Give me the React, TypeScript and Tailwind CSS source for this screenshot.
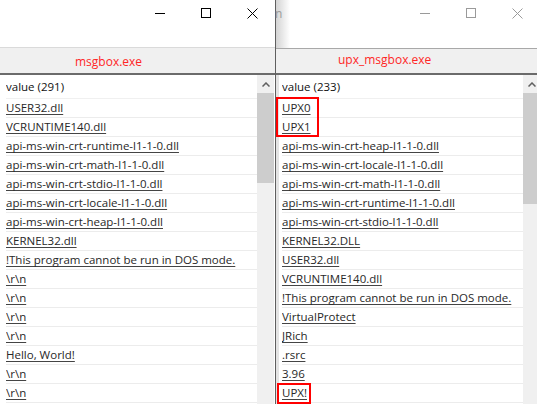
import React from 'react';

const leftItems = [
  'USER32.dll',
  'VCRUNTIME140.dll',
  'api-ms-win-crt-runtime-l1-1-0.dll',
  'api-ms-win-crt-math-l1-1-0.dll',
  'api-ms-win-crt-stdio-l1-1-0.dll',
  'api-ms-win-crt-locale-l1-1-0.dll',
  'api-ms-win-crt-heap-l1-1-0.dll',
  'KERNEL32.dll',
  '!This program cannot be run in DOS mode.',
  '\\r\\n',
  '\\r\\n',
  '\\r\\n',
  '\\r\\n',
  'Hello, World!',
  '\\r\\n',
  '\\r\\n',
];

const rightItems = [
  'UPX0',
  'UPX1',
  'api-ms-win-crt-heap-l1-1-0.dll',
  'api-ms-win-crt-locale-l1-1-0.dll',
  'api-ms-win-crt-math-l1-1-0.dll',
  'api-ms-win-crt-runtime-l1-1-0.dll',
  'api-ms-win-crt-stdio-l1-1-0.dll',
  'KERNEL32.DLL',
  'USER32.dll',
  'VCRUNTIME140.dll',
  '!This program cannot be run in DOS mode.',
  'VirtualProtect',
  'JRich',
  '.rsrc',
  '3.96',
  'UPX!',
];

const font = { fontFamily: '"Open Sans", "Noto Sans", sans-serif' };

const Controls: React.FC<{ color: string }> = ({ color }) => (
  <div className="flex ml-auto">
    <div className="w-[46px] h-[26px] flex items-center justify-center">
      <svg width="10" height="10" viewBox="0 0 10 10">
        <line x1="0" y1="5.5" x2="10" y2="5.5" stroke={color} strokeWidth="1" />
      </svg>
    </div>
    <div className="w-[46px] h-[26px] flex items-center justify-center">
      <svg width="10" height="10" viewBox="0 0 10 10">
        <rect x="0.5" y="0.5" width="9" height="9" fill="none" stroke={color} strokeWidth="1" />
      </svg>
    </div>
    <div className="w-[46px] h-[26px] flex items-center justify-center">
      <svg width="11" height="11" viewBox="0 0 11 11">
        <path d="M0.5 0.5 L10.5 10.5 M10.5 0.5 L0.5 10.5" stroke={color} strokeWidth="1" />
      </svg>
    </div>
  </div>
);

const Scrollbar: React.FC<{ thumb: string }> = ({ thumb }) => (
  <div className="w-[17px] shrink-0 bg-[#f0f0f0] flex flex-col">
    <div className="h-[18px] flex items-center justify-center">
      <svg width="8" height="5" viewBox="0 0 8 5">
        <path d="M0.5 4.5 L4 1 L7.5 4.5" fill="none" stroke="#606060" strokeWidth="1.5" />
      </svg>
    </div>
    <div className={`${thumb} bg-[#cdcdcd]`} />
  </div>
);

const Rows: React.FC<{ count: string; items: string[] }> = ({ count, items }) => (
  <div className="flex-1 flex flex-col overflow-hidden text-[11.5px]">
    <div className="h-[24px] shrink-0 flex items-center border-b border-[#f0f0f0] text-[#111]">
      value ({count})
    </div>
    {items.map((t, i) => (
      <div key={i} className="h-[19px] shrink-0 flex items-center border-b border-[#ececec] text-[#282828] whitespace-nowrap">
        <span className="underline decoration-[#444] underline-offset-2">{t}</span>
      </div>
    ))}
  </div>
);

export default function App() {
  return (
    <div className="w-[537px] h-[404px] flex overflow-hidden bg-white" style={font}>
      {/* left window */}
      <div className="w-[275px] shrink-0 flex flex-col">
        <div className="h-[47px] shrink-0 flex items-start bg-white">
          <Controls color="#000" />
        </div>
        <div className="h-[28px] shrink-0 border-t border-[#dadada] border-b-2 border-b-[#6b6b6b] bg-[#f0f0f0] flex items-center pl-[75px] pt-[2px] text-[12px] text-[#ff2626]">
          msgbox.exe
        </div>
        <div className="flex-1 flex overflow-hidden pl-[6px] pr-[1px]">
          <Rows count="291" items={leftItems} />
          <Scrollbar thumb="h-[90px]" />
        </div>
      </div>

      <div className="w-px shrink-0 bg-[#5f5f5f]" />

      {/* right window */}
      <div className="w-[264px] shrink-0 flex flex-col relative">
        <div className="h-[48px] shrink-0 flex items-start bg-gradient-to-r from-[#d4d4d4] via-white via-[14px] to-white">
          <span className="text-[12px] text-[#9a9a9a] mt-[5px] -ml-[1px]">n</span>
          <Controls color="#9a9a9a" />
        </div>
        <div className="h-[27px] shrink-0 border-t border-[#a8a8a8] border-b-2 border-b-[#6b6b6b] bg-[#f0f0f0] flex items-center pl-[62px] pb-[2px] text-[12px] text-[#ff2626]">
          upx_msgbox.exe
        </div>
        <div className="flex-1 flex overflow-hidden border-l-[3px] border-[#e4e4e4] pl-[3px]">
          <Rows count="233" items={rightItems} />
          <Scrollbar thumb="h-[111px]" />
        </div>
        <div className="absolute left-0 top-[97px] w-[43px] h-[40px] border-2 border-[#ff0000]" />
        <div className="absolute left-[1px] top-[383px] w-[34px] h-[21px] border-2 border-[#ff0000]" />
      </div>
    </div>
  );
}
